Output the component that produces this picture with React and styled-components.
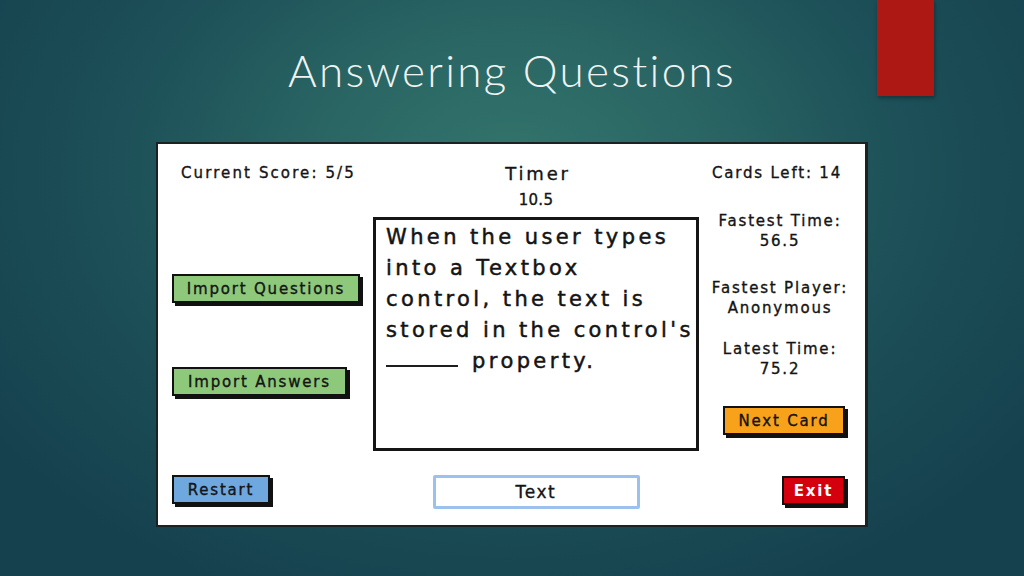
import React from 'react';
import styled, { createGlobalStyle } from 'styled-components';

const GlobalStyle = createGlobalStyle`
  html, body {
    margin: 0;
    padding: 0;
    background: #153f4c;
  }
  * {
    box-sizing: border-box;
  }
`;

const mock = `"DejaVu Sans", "Noto Sans", sans-serif`;

const questionLines = [
  'When the user types',
  'into a Textbox',
  'control, the text is',
  "stored in the control's",
];

const stats = [
  { label: 'Fastest Time:', value: '56.5', gap: 28 },
  { label: 'Fastest Player:', value: 'Anonymous', gap: 27 },
  { label: 'Latest Time:', value: '75.2', gap: 21 },
];

export default function App() {
  return (
    <>
      <GlobalStyle />
      <Slide>
        <Header>
          <Title>Answering Questions</Title>
          <Accent />
        </Header>

        <Mockup>
          <LeftColumn>
            <Score>Current Score: 5/5</Score>
            <MockButton $bg="#8dc87b" $width={188} $top={91}>
              Import Questions
            </MockButton>
            <MockButton $bg="#8dc87b" $width={175} $top={64}>
              Import Answers
            </MockButton>
            <MockButton $bg="#6fa7df" $width={98} $top={79}>
              Restart
            </MockButton>
          </LeftColumn>

          <CenterColumn>
            <TimerTitle>Timer</TimerTitle>
            <TimerValue>10.5</TimerValue>
            <QuestionCard>
              {questionLines.map((line, index) => (
                <QuestionLine key={index}>{line}</QuestionLine>
              ))}
              <QuestionLine>
                <Blank /> property.
              </QuestionLine>
            </QuestionCard>
            <AnswerBox>Text</AnswerBox>
          </CenterColumn>

          <RightColumn>
            <CardsLeft>Cards Left: 14</CardsLeft>
            {stats.map(stat => (
              <Stat key={stat.label} $top={stat.gap}>
                <Label>{stat.label}</Label>
                <Label>{stat.value}</Label>
              </Stat>
            ))}
            <MockButton $bg="#f8a21c" $width={122} $top={27} $right>
              Next Card
            </MockButton>
            <MockButton
              $bg="#d4000e"
              $width={63}
              $top={41}
              $right
              $light
            >
              Exit
            </MockButton>
          </RightColumn>
        </Mockup>
      </Slide>
    </>
  );
}

const Slide = styled.div`
  width: 1024px;
  height: 576px;
  overflow: hidden;
  display: flex;
  flex-direction: column;
  background: radial-gradient(
    ellipse 62% 80% at 50% 30%,
    #33756c 0%,
    #2a6664 30%,
    #1d5058 62%,
    #15414e 100%
  );
`;

const Header = styled.header`
  height: 142px;
  flex-shrink: 0;
  display: grid;
  grid-template-columns: 877px 57px 1fr;
  align-items: start;
`;

const Title = styled.h1`
  grid-column: 1 / -1;
  grid-row: 1;
  justify-self: center;
  margin: 0;
  padding-top: 48px;
  font-family: "Lato", "Open Sans", sans-serif;
  font-weight: 300;
  font-size: 44px;
  line-height: 44px;
  letter-spacing: 2.3px;
  color: #eef3f2;
`;

const Accent = styled.div`
  grid-column: 2;
  grid-row: 1;
  height: 96px;
  background: #ad1815;
  box-shadow: 1px 2px 4px rgba(0, 0, 0, 0.35);
`;

const Mockup = styled.section`
  margin-left: 156px;
  width: 712px;
  height: 385px;
  flex-shrink: 0;
  display: flex;
  background: #ffffff;
  border: 2px solid #1a2224;
  border-right-width: 3px;
  font-family: ${mock};
  color: #141414;
  -webkit-text-stroke: 0.35px #141414;
`;

const Column = styled.div`
  display: flex;
  flex-direction: column;
  padding-top: 19px;
`;

const LeftColumn = styled(Column)`
  width: 215px;
  flex-shrink: 0;
  padding-left: 14px;
  align-items: flex-start;
`;

const CenterColumn = styled(Column)`
  width: 326px;
  flex-shrink: 0;
  align-items: center;
`;

const RightColumn = styled(Column)`
  flex: 1;
  min-width: 0;
  padding-left: 16px;
  padding-right: 20px;
`;

const Label = styled.div`
  font-size: 15px;
  line-height: 20px;
  letter-spacing: 1.8px;
  white-space: nowrap;
`;

const Score = styled(Label)`
  margin-left: 9px;
  letter-spacing: 2.1px;
`;

const CardsLeft = styled(Label)`
  align-self: flex-end;
  margin-right: 3px;
`;

const Stat = styled.div`
  display: flex;
  flex-direction: column;
  align-items: center;
  margin-top: ${p => p.$top}px;
`;

const TimerTitle = styled.div`
  margin-left: 4px;
  font-size: 18px;
  line-height: 22px;
  letter-spacing: 2.8px;
`;

const TimerValue = styled.div`
  margin-top: 5px;
  font-size: 15px;
  line-height: 20px;
  letter-spacing: 0.3px;
`;

const QuestionCard = styled.div`
  align-self: stretch;
  height: 234px;
  margin-top: 7px;
  padding: 2px 6px 0 10px;
  border: 3px solid #151515;
  background: #fff;
`;

const QuestionLine = styled.div`
  font-size: 21px;
  line-height: 31px;
  letter-spacing: 3.4px;
  white-space: nowrap;
  -webkit-text-stroke: 0.5px #141414;
`;

const Blank = styled.span`
  display: inline-block;
  width: 72px;
  height: 2px;
  margin-right: 4px;
  vertical-align: 1px;
  background: #1e1e1e;
`;

const AnswerBox = styled.div`
  width: 207px;
  height: 34px;
  margin-top: 24px;
  display: flex;
  align-items: center;
  justify-content: center;
  border: 3px solid #9cc1ee;
  border-radius: 2px;
  font-size: 17px;
  letter-spacing: 1.6px;
`;

const MockButton = styled.div`
  width: ${p => p.$width}px;
  height: 29px;
  margin-top: ${p => p.$top}px;
  align-self: ${p => (p.$right ? 'flex-end' : 'flex-start')};
  display: flex;
  align-items: center;
  justify-content: center;
  background: ${p => p.$bg};
  border: 2px solid #111;
  box-shadow: 3px 3px 0 #111;
  font-size: 15px;
  font-weight: ${p => (p.$light ? 700 : 400)};
  letter-spacing: 1.8px;
  color: ${p => (p.$light ? '#ffffff' : '#141414')};
  -webkit-text-stroke: ${p => (p.$light ? '0' : '0.35px #141414')};
  white-space: nowrap;
`;
